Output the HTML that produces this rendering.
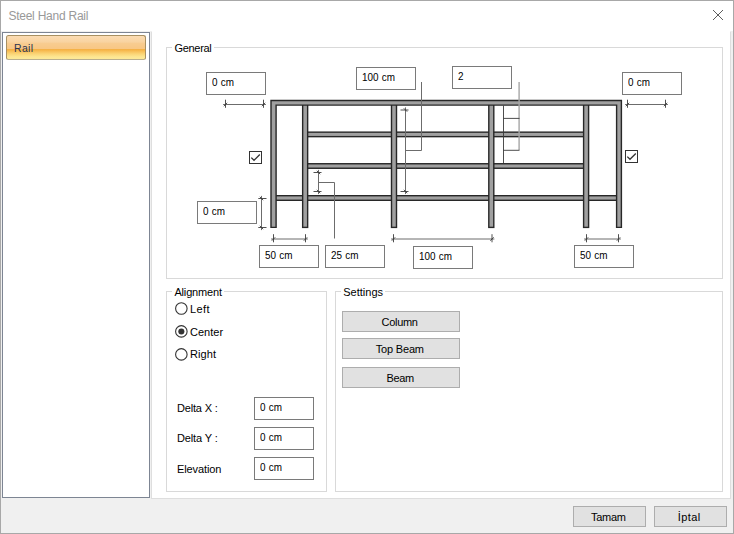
<!DOCTYPE html>
<html lang="tr">
<head>
<meta charset="utf-8">
<title>Steel Hand Rail</title>
<style>
html,body{margin:0;padding:0;background:#fff;}
body{width:734px;height:534px;position:relative;overflow:hidden;font-family:"Liberation Sans",sans-serif;}
.win{position:absolute;left:0;top:0;width:734px;height:534px;box-sizing:border-box;background:#fff;}
.client{position:absolute;left:1px;top:31px;width:732px;height:502px;background:#f0f0f0;}
.frame{position:absolute;left:0;top:0;width:734px;height:534px;box-sizing:border-box;border:1px solid #a8a8a8;pointer-events:none;}
.side{position:absolute;left:2px;top:32px;width:148px;height:466px;box-sizing:border-box;border:1px solid #7d8593;background:#fff;}
.railbtn{position:absolute;left:6px;top:35px;width:140px;height:25px;box-sizing:border-box;border:1px solid #a89062;border-bottom-color:#b9ae8e;border-radius:2.5px;
 background:linear-gradient(to bottom,#fbdcb4 0px,#f9d3a0 6px,#f8cc90 7.5px,#f8c785 12.6px,#f5b040 13.6px,#f7bd55 15px,#fbd678 18px,#fde793 21px,#fde998 23px);}
.main{position:absolute;left:151px;top:31px;width:580px;height:468px;box-sizing:border-box;border:1px solid #dedede;border-top-color:#fff;background:#fff;}
.grp{position:absolute;box-sizing:border-box;border:1px solid #d9d9d9;}
.lblbg{position:absolute;background:#fff;height:12px;}
.t{position:absolute;white-space:pre;line-height:16px;height:16px;}
.inp{position:absolute;width:60px;height:23px;box-sizing:border-box;border:1px solid #7a7a7a;background:#fff;}
.inp span{position:absolute;left:5px;top:1px;font-size:11px;line-height:16px;transform:scaleX(0.9);transform-origin:0 0;word-spacing:0.6px;color:#000;white-space:pre;}
.btn{position:absolute;box-sizing:border-box;border:1px solid #adadad;background:#e1e1e1;}
svg{position:absolute;left:0;top:0;}
.dl{stroke:#6c6c6c;stroke-width:1;}
.dt{stroke:#3c3c3c;stroke-width:0.9;}
</style>
</head>
<body>
<div class="win">
 <div class="client"></div>
 <div class="side"></div>
 <div class="railbtn"><span class="t" style="left:7.10px;top:4.00px;font-size:10.5px;letter-spacing:0.277px;color:#2a3350">Rail</span></div>
 <div class="main"></div>

 <div class="grp" style="left:166px;top:47px;width:557px;height:232px"></div>
 <div class="lblbg" style="left:172px;top:41px;width:42px"></div>
 <div class="grp" style="left:166px;top:291px;width:161px;height:201px"></div>
 <div class="lblbg" style="left:172px;top:285px;width:52px"></div>
 <div class="grp" style="left:335px;top:291px;width:388px;height:201px"></div>
 <div class="lblbg" style="left:341px;top:285px;width:44px"></div>

 <div class="btn" style="left:342px;top:311px;width:118px;height:21px"><span class="t" style="left:38.60px;top:2.00px;font-size:11px;letter-spacing:-0.301px;color:#000">Column</span></div>
 <div class="btn" style="left:342px;top:338px;width:118px;height:21px"><span class="t" style="left:32.80px;top:2.00px;font-size:11px;letter-spacing:-0.191px;color:#000">Top Beam</span></div>
 <div class="btn" style="left:342px;top:367px;width:118px;height:21px"><span class="t" style="left:43.60px;top:2.00px;font-size:11px;letter-spacing:-0.412px;color:#000">Beam</span></div>
 <div class="btn" style="left:573px;top:506px;width:73px;height:21px"><span class="t" style="left:16.90px;top:2.00px;font-size:11px;letter-spacing:-0.253px;color:#000">Tamam</span></div>
 <div class="btn" style="left:654px;top:506px;width:73px;height:21px"><span class="t" style="left:22.70px;top:2.00px;font-size:11px;letter-spacing:0.421px;color:#000">İptal</span></div>

 <svg width="734" height="534" viewBox="0 0 734 534">
  <!-- close X -->
  <path d="M713 10 L723 20 M723 10 L713 20" stroke="#5c5c5c" stroke-width="1" fill="none"/>
  <!-- rail -->
  <g stroke="#272727" stroke-width="1.4" fill="#a0a0a0">
   <!-- horizontal beams -->
   <rect x="305" y="132.15" width="281" height="4.5"/>
   <rect x="305" y="163.75" width="281" height="4.5"/>
   <rect x="273" y="195.7" width="346" height="4.6"/>
   <!-- inner columns -->
   <rect x="302.65" y="103" width="5" height="124.4"/>
   <rect x="391.5" y="103" width="5" height="124.4"/>
   <rect x="488.8" y="103" width="5" height="124.4"/>
   <rect x="583.6" y="103" width="5" height="124.4"/>
   <!-- outer frame -->
   <path d="M271 227.4 L271 100.5 L621.4 100.5 L621.4 227.4 L616.6 227.4 L616.6 105.1 L276.1 105.1 L276.1 227.4 Z"/>
  </g>
  <!-- dimension lines -->
  <g fill="none">
   <path class="dl" d="M223.1 104.5 H265.9 M625.1 104.5 H667.9 M271.1 239.0 H307.9 M391.1 239.0 H494.4 M584.1 239.0 H620.9 M261.5 195.9 V230.1 M405.5 107.4 V194.1 M318.5 169.9 V194.1"/>
   <path class="dt" d="M225.5 99.7 V107.8 M223.8 106.2 L227.2 102.8 M263.5 99.7 V107.8 M261.8 106.2 L265.2 102.8 M627.5 99.7 V107.8 M625.8 106.2 L629.2 102.8 M665.5 99.7 V107.8 M663.8 106.2 L667.2 102.8 M273.5 234.2 V242.3 M271.8 240.7 L275.2 237.3 M305.5 234.2 V242.3 M303.8 240.7 L307.2 237.3 M393.5 234.2 V242.3 M391.8 240.7 L395.2 237.3 M492.0 234.2 V242.3 M490.3 240.7 L493.7 237.3 M586.5 234.2 V242.3 M584.8 240.7 L588.2 237.3 M618.5 234.2 V242.3 M616.8 240.7 L620.2 237.3 M258.3 198.5 H266.5 M259.8 196.8 L263.2 200.2 M258.3 227.5 H266.5 M259.8 225.8 L263.2 229.2 M400.5 110.0 H408.5 M403.8 108.3 L407.2 111.7 M400.5 191.5 H408.5 M403.8 189.8 L407.2 193.2 M313.5 172.5 H321.5 M316.8 170.8 L320.2 174.2 M313.5 191.5 H321.5 M316.8 189.8 L320.2 193.2"/>
   <path class="dl" d="M405.5 150.5 H421.5 V82 M318.5 182.5 H334.5 V238.5"/>
  </g>
  <g stroke="#a6a6a6" stroke-width="1.4" fill="none">
   <path d="M519.1 82 V150"/>
  </g>
  <g stroke="#3a3a3a" stroke-width="0.9" fill="none">
   <path d="M503.5 105.5 V163 M503.5 118.4 H519.5 M503.5 150.3 H519.5"/>
  </g>
  <!-- radio buttons -->
  <g stroke="#333" stroke-width="1.1" fill="#fff">
   <circle cx="181.35" cy="308.5" r="5.75"/>
   <circle cx="181.35" cy="331.4" r="5.75"/>
   <circle cx="181.35" cy="354.4" r="5.75"/>
  </g>
  <circle cx="181.35" cy="331.5" r="3.05" fill="#333"/>
  <!-- checkboxes -->
  <g stroke="#333" stroke-width="1" fill="#fff">
   <rect x="249.5" y="151.5" width="12" height="12"/>
   <rect x="625.5" y="150.5" width="12" height="12"/>
  </g>
  <g stroke="#333" stroke-width="1.3" fill="none">
   <path d="M251.3 157.6 L254 160.3 L259.8 154.5"/>
   <path d="M627.3 156.6 L630 159.3 L635.8 153.5"/>
  </g>
 </svg>

<div class="inp" style="left:206px;top:72px"><span>0 cm</span></div>
<div class="inp" style="left:356px;top:67px"><span>100 cm</span></div>
<div class="inp" style="left:452px;top:66px"><span>2</span></div>
<div class="inp" style="left:622px;top:72px"><span>0 cm</span></div>
<div class="inp" style="left:197px;top:201px"><span>0 cm</span></div>
<div class="inp" style="left:259px;top:245px"><span>50 cm</span></div>
<div class="inp" style="left:325px;top:245px"><span>25 cm</span></div>
<div class="inp" style="left:413px;top:246px"><span>100 cm</span></div>
<div class="inp" style="left:574px;top:245px"><span>50 cm</span></div>
<div class="inp" style="left:254px;top:397px"><span>0 cm</span></div>
<div class="inp" style="left:254px;top:427px"><span>0 cm</span></div>
<div class="inp" style="left:254px;top:457px"><span>0 cm</span></div>
<div class="t" style="left:8.40px;top:8.00px;font-size:12px;letter-spacing:-0.239px;color:#999999">Steel Hand Rail</div>
<div class="t" style="left:174.40px;top:40.00px;font-size:11px;letter-spacing:-0.292px;color:#000">General</div>
<div class="t" style="left:174.40px;top:284.00px;font-size:11px;letter-spacing:-0.158px;color:#000">Alignment</div>
<div class="t" style="left:343.20px;top:284.00px;font-size:11px;letter-spacing:0.019px;color:#000">Settings</div>
<div class="t" style="left:190.00px;top:301.00px;font-size:11px;letter-spacing:0.385px;color:#000">Left</div>
<div class="t" style="left:190.00px;top:324.00px;font-size:11px;letter-spacing:0.028px;color:#000">Center</div>
<div class="t" style="left:190.00px;top:346.00px;font-size:11px;letter-spacing:0.082px;color:#000">Right</div>
<div class="t" style="left:177.00px;top:400.00px;font-size:11px;letter-spacing:-0.176px;color:#000">Delta X :</div>
<div class="t" style="left:177.00px;top:430.00px;font-size:11px;letter-spacing:-0.133px;color:#000">Delta Y :</div>
<div class="t" style="left:177.00px;top:461.00px;font-size:11px;letter-spacing:-0.096px;color:#000">Elevation</div>
 <div class="frame"></div>
</div>
</body>
</html>
